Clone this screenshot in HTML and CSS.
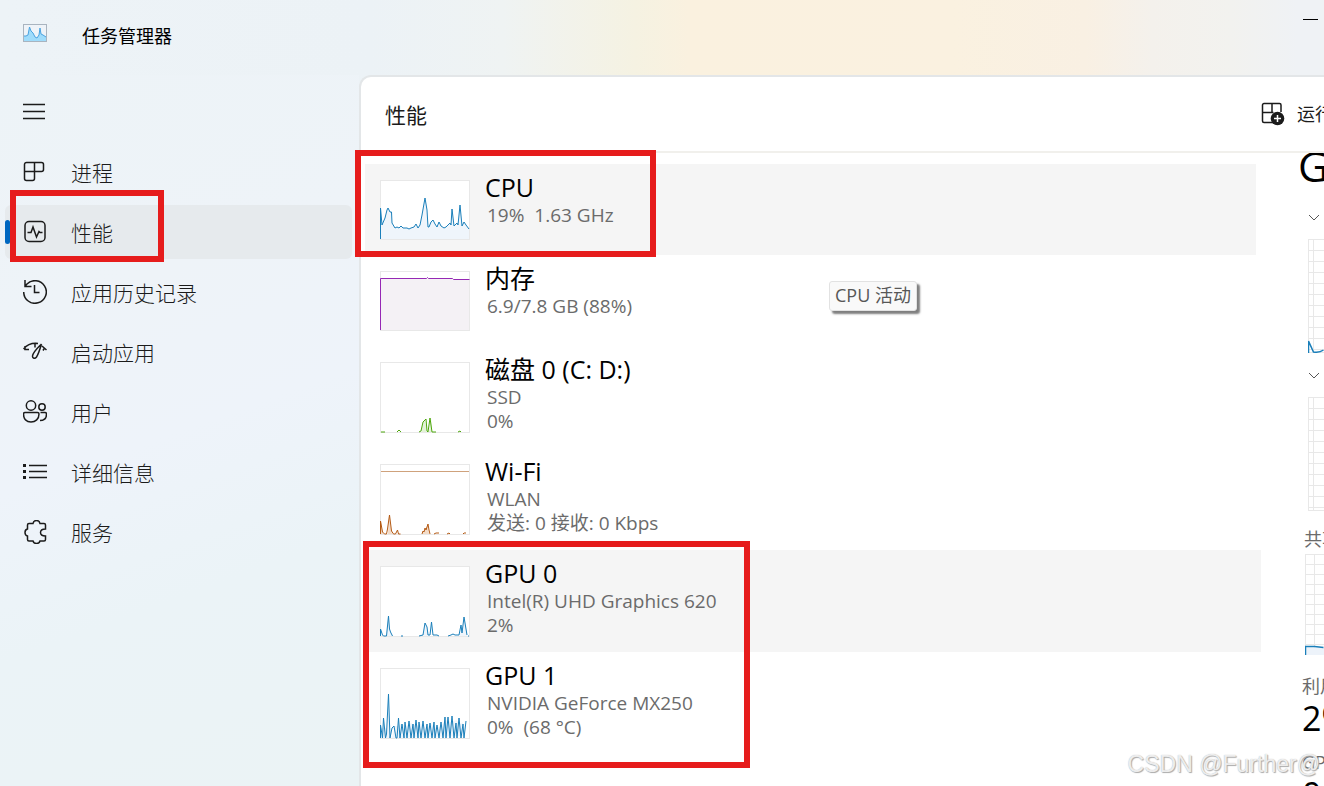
FILE: index.html
```html
<!DOCTYPE html>
<html lang="zh-CN">

<head>
    <meta charset="UTF-8">
    <meta name="viewport" content="width=device-width, initial-scale=1.0">
    <title>任务管理器</title>
    <link rel="stylesheet" href="styles.css">
</head>

<body>
    <div class="window">
        <header class="titlebar">
            <svg class="app-icon" viewBox="0 0 24 18">
                <rect x="0.5" y="0.5" width="23" height="17" fill="#eef3f8" stroke="#a9b4bf" />
                <path d="M1 17V12L3 12 5 11 6.500 3 8 7 10 9 12 13 14 14 16 11 17 4 18 10 20 11 23 13V17z" fill="#9fdcfb" stroke="none" />
                <path d="M1 12L3 12 5 11 6.500 3 8 7 10 9 12 13 14 14 16 11 17 4 18 10 20 11 23 13" stroke="#4aa3e0" />
            </svg>
            <h1>任务管理器</h1>
            <button class="minimize" aria-label="最小化"></button>
        </header>

        <div class="body">
            <aside class="sidebar">
                <button class="menu-toggle" aria-label="打开导航">
                    <svg viewBox="0 0 24 24"><path d="M0 4.500h22M0 11.500h22M0 18.500h22" /></svg>
                </button>
                <nav>
                    <button class="nav-item">
                        <svg viewBox="0 0 24 24"><path d="M3.500 2.500h15a2 2 0 0 1 2 2v5a2 2 0 0 1-2 2h-7v7a2 2 0 0 1-2 2h-6a2 2 0 0 1-2-2v-14a2 2 0 0 1 2-2zM11.500 2.500v9M1.500 11.500h10" /></svg>
                        <span>进程</span>
                    </button>
                    <button class="nav-item active">
                        <svg viewBox="0 0 24 24"><rect x="2" y="1.500" width="20" height="20" rx="4" /><path d="M4.500 12.500h3.500l2-5.500 3.500 10 2.500-5.500 1 1h2.500" /></svg>
                        <span>性能</span>
                        <i class="mark mark-nav"></i>
                    </button>
                    <button class="nav-item">
                        <svg viewBox="0 0 24 24"><path d="M.7 12a11.300 11.300 0 1 0 3-7.700L2 6.500M2 0v6.500h6.500M11.500 5v7.500h5" /></svg>
                        <span>应用历史记录</span>
                    </button>
                    <button class="nav-item">
                        <svg viewBox="0 0 24 24"><path d="M.5 9Q6 2.500 15 3.500M2 6v3.500h4M12 3v4.500M18.500 4c-3 3-8.500 8-9 12-.2 2.500 2.500 3 4 1 2-3 3.500-8 5-13M19 6l4.500 4M20 10.500l1.500-2.500" /></svg>
                        <span>启动应用</span>
                    </button>
                    <button class="nav-item">
                        <svg viewBox="0 0 24 24"><circle cx="8" cy="5.500" r="4.700" /><circle cx="19" cy="7" r="3.200" /><path d="M2 12.500h12.500q1.500 0 1.500 1.500c0 5-3.500 8-8 8s-7.500-3-7.500-8q0-1.500 1.500-1.500zM17.500 12.500h4.500q1.500 0 1.500 1.500c0 4-2.500 6.500-6.500 6.500" /></svg>
                        <span>用户</span>
                    </button>
                    <button class="nav-item">
                        <svg viewBox="0 0 24 24"><path d="M6 5.500h18M6 11.500h18M6 17.500h18" /><path class="dots" d="M0 5.500h3M0 11.500h3M0 17.500h3" /></svg>
                        <span>详细信息</span>
                    </button>
                    <button class="nav-item">
                        <svg viewBox="0 0 24 24"><path d="M6 3.500h4q.5-3 3.500-3t3.500 3h4q1.500 0 1.500 1.500v4q-5 0-5 3.500t5 3.500v3.500q0 1.500-1.500 1.500h-4q-.5 2.500-3.500 2.500T10 21H6q-1.500 0-1.500-1.500v-3.500q-2.500-.5-2.500-3.500T4.500 9V5Q4.500 3.500 6 3.500z" /></svg>
                        <span>服务</span>
                    </button>
                </nav>
            </aside>

            <main class="main">
                <div class="toolbar">
                    <h2>性能</h2>
                    <button class="run-task">
                        <svg viewBox="0 0 24 24"><path d="M12 20.500H3a1.500 1.500 0 0 1-1.500-1.500V3A1.500 1.500 0 0 1 3 1.500h15.500A1.500 1.500 0 0 1 20 3v7M11 1.500v9M1.500 10.500h11" /><circle cx="16.500" cy="16.500" r="6.800" fill="#1b1b1b" stroke="none" /><path d="M16.500 13v7M13 16.500h7" stroke="#fff" /></svg>
                        <span>运行新任务</span>
                    </button>
                </div>

                <div class="content">
                    <div class="perf-list">
                        <button class="perf-item selected">
                            <svg class="chart cpu" viewBox="0 0 90 60">
                                <path class="area" d="M1 59V28L2 45 5 38 7 30 8 28 10 32 11.500 32 12 43 15 48 17 47 19 48 21 46 23 48 27 48 29 49 31 48 34 47 36 44 37 46 38 48 40 45 42 35 45 18 47 30 48 47 49 47 51 42 53 40 55 44 57 47 59 42 61 46 64 48 66 47 68 45 70 43 71 45 72 29 74 46 77 43 78 45 80 25 82 46 84 42 86 45 89 49V59z" />
                                <path d="M.5 59V28L2 45 5 38 7 30 8 28 10 32 11.500 32 12 43 15 48 17 47 19 48 21 46 23 48 27 48 29 49 31 48 34 47 36 44 37 46 38 48 40 45 42 35 45 18 47 30 48 47 49 47 51 42 53 40 55 44 57 47 59 42 61 46 64 48 66 47 68 45 70 43 71 45 72 29 74 46 77 43 78 45 80 25 82 46 84 42 86 45 89 49" />
                            </svg>
                            <span class="info"><b>CPU</b><small>19%&nbsp; 1.63 GHz</small></span>
                        </button>
                        <button class="perf-item">
                            <svg class="chart memory" viewBox="0 0 90 60">
                                <path class="area" d="M1 59V7h72l1 1h15v51z" />
                                <path d="M.5 59V7.500h46l1-1 1 1h24l1 1h16" />
                            </svg>
                            <span class="info"><b>内存</b><small>6.9/7.8 GB (88%)</small></span>
                        </button>
                        <button class="perf-item">
                            <svg class="chart tall disk" viewBox="0 0 90 71">
                                <path class="area" d="M41 70l2-9 2-4 2 13zM49 70l2-14 1 14z" />
                                <path d="M1 70h4M17 70l2-2 2 2M39 70l2-1 2-9 3-3 1 12 1 1 2-14 2 14h4M78 70l2-1 1 1" />
                            </svg>
                            <span class="info"><b>磁盘 0 (C: D:)</b><small>SSD</small><small>0%</small></span>
                        </button>
                        <button class="perf-item">
                            <svg class="chart tall wifi" viewBox="0 0 90 71">
                                <path class="limit" d="M1 7.500h88" />
                                <path class="area" d="M1 70V58l2 12zM8 70l1-18 3 18zM42 70l6-9 1 9z" />
                                <path d="M.5 70V57l2 11 2 2h2l1-5 2-14 2 16 2 3h2l2-4 1 4h2M42 70l1-3 1 1 1-4 1 2 2-6 1 6 1 4M54 70l2-1h3M67 70l2-1 1 1M83 70l1-1h2" />
                            </svg>
                            <span class="info"><b>Wi-Fi</b><small>WLAN</small><small>发送: 0 接收: 0 Kbps</small></span>
                        </button>
                        <button class="perf-item hover">
                            <svg class="chart tall gpu" viewBox="0 0 90 71">
                                <path class="area" d="M6 70l2-20 2 14 2 6zM43 70l2-13 2 3 2 10zM79 70l6-17 2 17z" />
                                <path d="M.5 70v-7l2 6 1 1h3l2-20 1 13 1 3 2 4M21 70h2M39 70l4-1 2-12 2 4 1 8h2l1.500-13 1.500 13h4l2 1M68 70l3-1 2-1 2 1h4l2-10 1 8 2-16 3 18M88 70h1" />
                            </svg>
                            <span class="info"><b>GPU 0</b><small>Intel(R) UHD Graphics 620</small><small>2%</small></span>
                        </button>
                        <button class="perf-item">
                            <svg class="chart tall gpu" viewBox="0 0 90 71">
                                <path class="area" d="M1 70V60h6l2-20 1 30zM12 70l3-12 3 0 3-2 5 2 5-3 5 3 5-2 5 4 5-4 5 4 5-2 5-6 5 2 5-2 5 4 2-2v14z" />
                                <path d="M.5 70V57l2 13 1-20 2 20 1-4 2-40 1.500 44 2-10 2-2 2 12h1l1.500-20 1.500 20 2-14 2 14 1-16 2 16 2-17 2 17 2-14 1 14 2-18 2 18 1-16 2 16 2-17 2 17 2-14 1 14 2-15 2 15 2-16 1 16 2-13 2 13 2-16 2 16 2-21 1 21 2-21 2 21 2-22 2 22 2-15 1 15 2-20 2 20 2-14 1 14 2-17" />
                            </svg>
                            <span class="info"><b>GPU 1</b><small>NVIDIA GeForce MX250</small><small>0%&nbsp; (68 °C)</small></span>
                        </button>
                        <div class="tooltip" role="tooltip">CPU 活动</div>
                        <i class="mark mark-cpu"></i>
                        <i class="mark mark-gpu"></i>
                    </div>

                    <section class="detail">
                        <h3>GPU</h3>
                        <button class="fold" aria-label="3D"><svg viewBox="0 0 12 8"><path d="M1 1l5 5 5-5" /></svg></button>
                        <div class="grid">
                            <svg viewBox="0 0 16 114"><path d="M.5 114v-12l5 11q6 1 10-2" /></svg>
                        </div>
                        <button class="fold" aria-label="Video Decode"><svg viewBox="0 0 12 8"><path d="M1 1l5 5 5-5" /></svg></button>
                        <div class="grid"></div>
                        <p class="label">共享 GPU 内存利用率</p>
                        <div class="grid memory-grid">
                            <svg viewBox="0 0 19 101"><path class="fill" d="M0 101V93l19 1v7z" /><path d="M.5 101v-8.500h9l9 1" /></svg>
                        </div>
                        <p class="stat-label">利用率</p>
                        <p class="stat">2%</p>
                        <p class="stat-label">GPU 内存</p>
                        <p class="stat">0.9/3.9 GB</p>
                    </section>
                </div>
            </main>
        </div>
        <div class="watermark">CSDN @Further@</div>
    </div>
</body>

</html>
```
FILE: styles.css
```css
* {
    box-sizing: border-box;
}

body {
    margin: 0;
    font-family: "Open Sans", "Noto Sans CJK SC", sans-serif;
    color: #1b1b1b;
}

h1, h2, h3, p {
    margin: 0;
    font-weight: 400;
}

button {
    padding: 0;
    border: none;
    background: none;
    color: inherit;
    font-family: inherit;
    text-align: left;
    cursor: pointer;
}

svg {
    display: block;
    flex-shrink: 0;
    fill: none;
    stroke: #1b1b1b;
    stroke-width: 1.5;
}

.window {
    position: relative;
    display: flex;
    flex-direction: column;
    height: 100vh;
    overflow: hidden;
    background: linear-gradient(90deg, #edf3f7 0%, #ecf2f6 28%, #eff3f3 38%, #f5f2e2 48%, #faf1df 52%, #faf1e0 72%, #f9f0e3 82%, #f4f1ec 87%, #f2f2ef 93%, #eff2f5 98%);
}

/* 标题栏 */
.titlebar {
    display: flex;
    align-items: center;
    flex: 0 0 75px;
    padding: 0 6px 10px 23px;
}

.titlebar h1 {
    margin-left: 35px;
    padding-top: 6px;
    font-size: 18px;
    line-height: 24px;
    color: #000;
}

.app-icon {
    width: 24px;
    height: 18px;
    stroke-width: 1;
}

.minimize {
    align-self: flex-start;
    width: 15px;
    height: 20px;
    margin-left: auto;
    border-bottom: 1px solid #000;
}

.body {
    display: flex;
    flex: 1;
    min-height: 0;
}

/* 左侧导航 */
.sidebar {
    flex: 0 0 359px;
    padding: 25px 7px 0 5px;
    background: linear-gradient(160deg, #edf3f7 0%, #eef3f8 30%, #eef3fa 50%, #ebf3f7 70%, #ebf3f5 100%);
}

.menu-toggle {
    display: block;
    margin: 0 0 21px 18px;
}

.menu-toggle svg,
.nav-item svg {
    width: 24px;
    height: 24px;
}

.nav-item {
    position: relative;
    display: flex;
    align-items: center;
    gap: 24px;
    width: 100%;
    height: 54px;
    margin-bottom: 6px;
    padding-left: 18px;
    border-radius: 6px;
    font-size: 21px;
    line-height: 30px;
    font-weight: 300;
}

.nav-item span {
    padding-top: 2px;
}

.nav-item .dots {
    stroke-width: 3;
}

.nav-item.active {
    background: #e6eaed;
}

.nav-item.active::before {
    content: "";
    position: absolute;
    left: 0;
    top: 15px;
    width: 5px;
    height: 24px;
    border-radius: 3px;
    background: #0067c0;
}

/* 右侧主区域 */
.main {
    display: flex;
    flex: 1;
    flex-direction: column;
    min-width: 0;
    border: 2px solid #e3e6e8;
    border-width: 2px 0 0 2px;
    border-radius: 12px 0 0 0;
    background: #fff;
}

.toolbar {
    display: flex;
    align-items: center;
    justify-content: space-between;
    flex: 0 0 76px;
    padding-left: 24px;
    border-bottom: 2px solid #f1f0ec;
}

.toolbar h2 {
    padding-top: 2px;
    font-size: 21px;
    line-height: 30px;
}

.run-task {
    display: flex;
    align-items: center;
    gap: 12px;
    width: 63px;
    overflow: hidden;
    font-size: 18px;
    line-height: 24px;
    white-space: nowrap;
}

.run-task svg {
    width: 24px;
    height: 24px;
}

.content {
    display: flex;
    flex: 1;
    gap: 44px;
    min-height: 0;
}

.perf-list {
    position: relative;
    flex: 1;
    min-width: 0;
    padding: 11px 0 0 4px;
}

.perf-item {
    display: flex;
    align-items: flex-start;
    gap: 15px;
    width: 100%;
    padding: 16px 15px 15px;
}

.perf-item.selected {
    background: #f5f5f5;
}

.perf-item.hover {
    width: calc(100% + 5px);
    background: #f5f5f5;
}

.chart {
    width: 90px;
    height: 60px;
    background: linear-gradient(#fff, #fff) center / calc(100% - 2px) calc(100% - 2px) no-repeat #e8e8e8;
    stroke-width: 1;
}

.chart.tall {
    height: 71px;
}

.chart .area {
    stroke: none;
}

.cpu, .gpu {
    stroke: #1a7fba;
}

.cpu .area, .gpu .area {
    fill: #eff5fb;
}

.memory {
    stroke: #9528b4;
}

.memory .area {
    fill: #f4f1f5;
}

.disk {
    stroke: #4da60c;
}

.disk .area {
    fill: #e3f2d8;
}

.wifi {
    stroke: #b45a14;
}

.wifi .area {
    fill: #f3dcc8;
}

.wifi .limit {
    stroke: #cfa27c;
}

.info {
    display: flex;
    flex-direction: column;
    height: 44px;
    margin-top: -7px;
}

.info b {
    margin-bottom: 1px;
    font-size: 25px;
    line-height: 29px;
    font-weight: 400;
    color: #000;
}

.info small {
    padding-left: 2px;
    font-size: 19px;
    line-height: 24px;
    color: #6b6b6b;
    white-space: nowrap;
}

.tooltip {
    position: absolute;
    left: 468px;
    top: 128px;
    padding: 1px 5px 3px;
    border: 1px solid #e2e2e2;
    border-radius: 3px;
    background: #f9f9f9;
    box-shadow: 3px 3px 2px rgba(0, 0, 0, 0.5);
    font-size: 18px;
    line-height: 24px;
    color: #575757;
}

/* 右侧详情，超出窗口的部分裁掉 */
.detail {
    flex: 0 0 24px;
    overflow: hidden;
    white-space: nowrap;
}

.detail h3 {
    height: 61px;
    margin-left: -2px;
    font-size: 42px;
    line-height: 26px;
    color: #000;
}

.fold {
    display: block;
    margin: 0 0 17px 8px;
}

.fold svg {
    width: 12px;
    height: 8px;
    stroke: #555;
    stroke-width: 1;
}

.grid {
    height: 114px;
    margin: 0 0 19px 8px;
    border: 1px solid #e8e8e8;
    border-right: none;
    background-image: linear-gradient(90deg, transparent 4px, #e8e8e8 4px, #e8e8e8 5px, transparent 5px), repeating-linear-gradient(transparent 0, transparent 10px, #e8e8e8 10px, #e8e8e8 11px);
}

.grid svg {
    width: 16px;
    height: 114px;
    margin: -1px;
    stroke: #1a7fba;
}

.label {
    margin: -3px 0 3px 4px;
    font-size: 18px;
    line-height: 24px;
    color: #6b6b6b;
}

.memory-grid {
    height: 101px;
    margin-left: 5px;
    background-image: linear-gradient(90deg, transparent 8px, #e8e8e8 8px, #e8e8e8 9px, transparent 9px), repeating-linear-gradient(transparent 0, transparent 9px, #e8e8e8 9px, #e8e8e8 10px);
}

.memory-grid svg {
    width: 19px;
    height: 101px;
}

.memory-grid .fill {
    fill: #edf3fa;
    stroke: none;
}

.stat-label {
    margin-left: 2px;
    font-size: 18px;
    line-height: 24px;
    color: #6b6b6b;
}

.stat {
    margin: 0 0 12px 2px;
    font-size: 34px;
    line-height: 40px;
    color: #000;
}

/* 红框标注 */
.mark {
    position: absolute;
    border: 6px solid #e61c1c;
    pointer-events: none;
}

.mark-nav {
    left: 5px;
    top: -15px;
    width: 154px;
    height: 72px;
}

.mark-cpu {
    left: -6px;
    top: -3px;
    width: 301px;
    height: 107px;
}

.mark-gpu {
    left: 2px;
    top: 388px;
    width: 387px;
    height: 227px;
}

.watermark {
    position: absolute;
    right: 4px;
    bottom: 8px;
    font-family: "Liberation Sans", sans-serif;
    font-size: 23px;
    line-height: 28px;
    color: rgba(255, 255, 255, 0.8);
    text-shadow: 0 0 1px #aaa, 1px 1px 1px #aaa;
}
```
